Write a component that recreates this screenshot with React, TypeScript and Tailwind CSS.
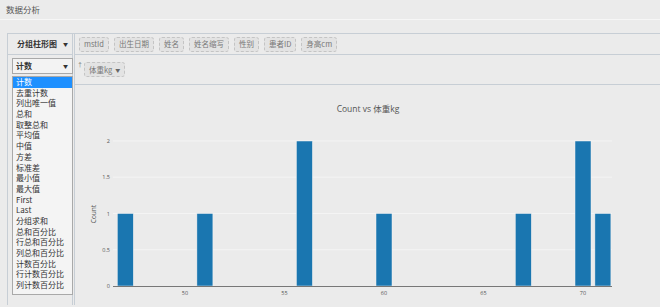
const fields = ["mstId", "出生日期", "姓名", "姓名缩写", "性别", "患者ID", "身高cm"];

const aggregators = [
  "计数",
  "去重计数",
  "列出唯一值",
  "总和",
  "取整总和",
  "平均值",
  "中值",
  "方差",
  "标准差",
  "最小值",
  "最大值",
  "First",
  "Last",
  "分组求和",
  "总和百分比",
  "行总和百分比",
  "列总和百分比",
  "计数百分比",
  "行计数百分比",
  "列计数百分比",
];

const bars = [
  { v: 47, n: 1 },
  { v: 51, n: 1 },
  { v: 56, n: 2 },
  { v: 60, n: 1 },
  { v: 67, n: 1 },
  { v: 70, n: 2 },
  { v: 71, n: 1 },
];

const xOf = (v: number) => 185 + (v - 50) * 19.9;
const yOf = (n: number) => 288 - n * 72.5;

const Chip = ({ label, arrow }: { label: string; arrow?: boolean }) => (
  <span className="inline-flex items-center h-[15px] px-[4px] rounded-[3px] border border-dashed border-[#c4c4c4] bg-[#e3e3e3] text-[7.5px] leading-none text-[#777] whitespace-nowrap">
    {label}
    {arrow && <span className="ml-[3px] text-[5px] text-[#666]">▼</span>}
  </span>
);

const Chart = () => (
  <svg viewBox="75 87 585 220" width={585} height={220} className="block">
    <text x={368} y={114} textAnchor="middle" fontSize={8.5} fill="#555" fontFamily="'Open Sans', 'Noto Sans CJK SC', sans-serif">
      Count vs 体重kg
    </text>
    {[0.5, 1, 1.5, 2].map((n) => (
      <line key={n} x1={113} x2={612} y1={yOf(n)} y2={yOf(n)} stroke="#f4f4f4" strokeWidth={1} />
    ))}
    {[0, 0.5, 1, 1.5, 2].map((n) => (
      <text key={n} x={110} y={yOf(n) + 2} textAnchor="end" fontSize={5.5} fill="#555" fontFamily="'Open Sans', sans-serif">
        {n}
      </text>
    ))}
    <text
      x={96}
      y={216}
      transform="rotate(-90 96 216)"
      textAnchor="middle"
      fontSize={6.5}
      fill="#555"
      fontFamily="'Open Sans', sans-serif"
    >
      Count
    </text>
    {bars.map((b) => (
      <rect
        key={b.v}
        x={xOf(b.v) - 8}
        y={yOf(b.n)}
        width={16}
        height={288 - yOf(b.n)}
        fill="#1a76b0"
        stroke="#f2f2f2"
        strokeWidth={0.5}
      />
    ))}
    <line x1={113} x2={612} y1={288.5} y2={288.5} stroke="#777" strokeWidth={1} />
    {[50, 55, 60, 65, 70].map((v) => (
      <text key={v} x={xOf(v)} y={297} textAnchor="middle" fontSize={5.5} fill="#555" fontFamily="'Open Sans', sans-serif">
        {v}
      </text>
    ))}
  </svg>
);

export default function App() {
  return (
    <div
      className="w-[660px] h-[307px] overflow-hidden bg-[#ebebeb] text-[#333]"
      style={{ fontFamily: "'Noto Sans CJK SC', 'Noto Sans', sans-serif" }}
    >
      <div className="h-[20px] px-[6px] text-[8.5px] leading-[19px] text-[#555] border-b border-[#f6f6f6]">
        数据分析
      </div>
      <div className="h-[13px]" />
      <div className="ml-[7px] flex border-t border-l border-[#c7ced5]">
        <div className="w-[67px] shrink-0 border-r-[3px] border-double border-[#c7ced5]">
          <div className="h-[21px] flex items-center justify-between pl-[9px] pr-[4px] border-b border-[#c7ced5] text-[8px] font-semibold text-[#333]">
            <span>分组柱形图</span>
            <span className="text-[5px]">▼</span>
          </div>
          <div className="relative pt-[3px] pl-[4px]">
            <div className="w-[61px] h-[16px] flex items-center justify-between pl-[3px] pr-[4px] border border-[#a9a9a9] bg-[#f3f3f3] text-[8px] font-semibold">
              <span>计数</span>
              <span className="text-[5px]">▼</span>
            </div>
            <div className="mt-[2px] w-[61px] h-[219px] border border-[#a9a9a9] bg-[#f4f4f4]">
              {aggregators.map((a, i) => (
                <div
                  key={a}
                  className={
                    i === 0
                      ? "h-[10.7px] pl-[3px] text-[8px] leading-[10.7px] bg-[#1e90ff] text-white"
                      : "h-[10.7px] pl-[3px] text-[8px] leading-[10.7px] text-[#333]"
                  }
                >
                  {a}
                </div>
              ))}
            </div>
          </div>
        </div>
        <div className="flex-1 min-w-0">
          <div className="h-[21px] flex items-center gap-[5px] pl-[4px] border-b border-[#c7ced5]">
            {fields.map((f) => (
              <Chip key={f} label={f} />
            ))}
          </div>
          <div className="h-[30px] flex items-start pt-[7px] pl-[2px] border-b border-[#c7ced5]">
            <span className="text-[6px] leading-none text-[#777] mr-[1px]">↑</span>
            <Chip label="体重kg" arrow />
          </div>
          <Chart />
        </div>
      </div>
    </div>
  );
}
